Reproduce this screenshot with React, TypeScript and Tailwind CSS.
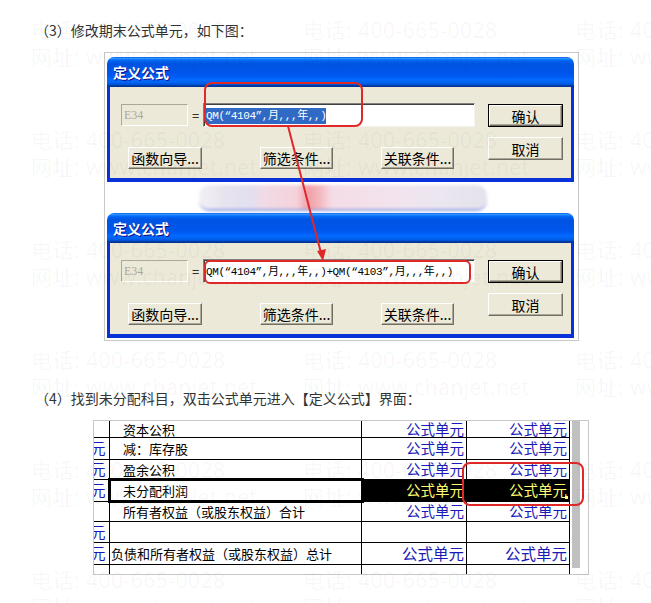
import React from "react";

const CJK = "font-['Noto_Sans_CJK_SC','Noto_Sans',sans-serif]";

function Btn({
  children,
  className = "",
  isDefault = false,
}: {
  children: React.ReactNode;
  className?: string;
  isDefault?: boolean;
}) {
  return (
    <div className={`${isDefault ? "border border-black" : ""} bg-[#ece9d8] ${className}`}>
      <div className="h-full w-full flex items-center justify-center border border-t-white border-l-white border-r-[#716f64] border-b-[#716f64] shadow-[inset_-1px_-1px_0_#aca899] text-[14px] leading-none text-black">
        {children}
      </div>
    </div>
  );
}

function Dialog({ selected, formula }: { selected: boolean; formula: string }) {
  return (
    <div className={`w-[467px] h-[125px] flex flex-col rounded-t-[7px] overflow-hidden ${CJK}`}>
      <div className="h-[30px] shrink-0 flex items-center pl-[6px] bg-[linear-gradient(180deg,#0058ee_0%,#3593ff_4%,#288eff_6%,#127dff_8%,#036ffc_10%,#0262ee_14%,#0057e5_20%,#0054e3_24%,#0055eb_56%,#005bf5_66%,#026afe_76%,#0062ef_86%,#0052d6_92%,#0040ab_94%,#003092_100%)]">
        <span className="text-white font-bold text-[14px] leading-none [text-shadow:1px_1px_0_#0f1089]">定义公式</span>
      </div>
      <div className="flex-1 bg-[#ece9d8] border-x-[3px] border-b-[4px] border-[#0831d9] flex pl-[11px] pt-[16px]">
        <div className="flex flex-col w-[354px]">
          <div className="flex items-center h-[24px]">
            <div className="w-[67px] h-[22px] border border-t-[#aca899] border-l-[#aca899] border-r-white border-b-white bg-[#ece9d8] flex items-center pl-[2px] text-[12px] text-[#aca899] font-['Liberation_Serif',serif]">
              E34
            </div>
            <div className="w-[15px] text-center text-[13px] text-black leading-none">=</div>
            <div className="w-[272px] h-[24px] bg-white border border-t-[#808080] border-l-[#808080] border-r-[#f4f3ee] border-b-[#f4f3ee] shadow-[inset_1px_1px_0_#404040] flex items-center pl-[2px] pt-[1px]">
              <span
                className={`text-[11px] leading-[16px] tracking-[-0.4px] whitespace-nowrap font-['Liberation_Mono','Noto_Sans_CJK_SC',monospace] ${
                  selected ? "bg-[#316ac5] text-white" : "text-black"
                }`}
              >
                {formula}
              </span>
            </div>
          </div>
          <div className="flex mt-[20px] h-[22px]">
            <Btn className="ml-[7px] w-[74px]">函数向导...</Btn>
            <Btn className="ml-[58px] w-[73px]">筛选条件...</Btn>
            <Btn className="ml-[48px] w-[73px]">关联条件...</Btn>
          </div>
        </div>
        <div className="flex flex-col ml-[13px]">
          <Btn isDefault className="mt-[1px] w-[75px] h-[23px]">确认</Btn>
          <Btn className="mt-[10px] w-[75px] h-[23px]">取消</Btn>
        </div>
      </div>
    </div>
  );
}

type Row = {
  label: string;
  pad: boolean;
  left: boolean;
  h: string;
  vals: boolean;
  sel?: boolean;
  big?: boolean;
};

const rows: Row[] = [
  { label: "资本公积", pad: true, left: false, h: "h-[17px]", vals: true },
  { label: "减：库存股", pad: true, left: true, h: "h-[22px]", vals: true },
  { label: "盈余公积", pad: true, left: true, h: "h-[20px]", vals: true },
  { label: "未分配利润", pad: true, left: true, h: "h-[22px]", vals: true, sel: true },
  { label: "所有者权益（或股东权益）合计", pad: true, left: false, h: "h-[20px]", vals: true },
  { label: "", pad: true, left: true, h: "h-[21px]", vals: false },
  { label: "负债和所有者权益（或股东权益）总计", pad: false, left: true, h: "h-[22px]", vals: true, big: true },
];

function Table() {
  return (
    <div className={`relative ml-[93px] mt-[12px] w-[496px] h-[155px] border border-[#c8c8c8] flex ${CJK}`}>
      <div className="flex flex-col w-[476px]">
        {rows.map((r, i) => (
          <div key={i} className={`flex ${r.h} border-b border-black`}>
            <div className="w-[16px] border-r border-black overflow-hidden flex items-center">
              {r.left && (
                <span className="ml-[-3px] text-[14.5px] leading-none text-[#1a1ab8]">元</span>
              )}
            </div>
            <div
              className={`w-[252px] border-r border-black flex items-center text-[13px] leading-none text-black whitespace-nowrap ${
                r.pad ? "pl-[13px]" : "pl-[1px]"
              } ${r.sel ? "outline-3 outline-double outline-black -outline-offset-1" : ""}`}
            >
              {r.label}
            </div>
            {[0, 1].map((c) => (
              <div
                key={c}
                className={`${c === 0 ? "w-[105px]" : "w-[103px]"} relative border-r border-black flex items-center justify-end pr-[2px] whitespace-nowrap leading-none ${
                  r.big ? "text-[15.5px]" : "text-[14.5px]"
                } ${r.sel ? "bg-black text-[#ffff70]" : "text-[#1a1ab8]"}`}
              >
                {r.vals ? "公式单元" : ""}
                {r.sel && c === 1 && (
                  <span className="absolute right-[1px] bottom-[2px] w-[3px] h-[3px] bg-[#ffff70]" />
                )}
              </div>
            ))}
          </div>
        ))}
        <div className="flex flex-1">
          <div className="w-[16px] border-r border-black" />
          <div className="w-[252px] border-r border-black" />
          <div className="w-[105px] border-r border-black" />
          <div className="w-[103px] border-r border-black" />
        </div>
      </div>
      <div className="ml-[2px] w-[8px] h-[147px] bg-[#c0c0c0]" />
      <svg className="pointer-events-none absolute left-0 top-0" width="494" height="153">
        <rect x="369" y="42" width="120" height="42" rx="7" fill="none" stroke="#e02828" strokeWidth="2" />
      </svg>
    </div>
  );
}

function Watermark() {
  const cells = Array.from({ length: 18 });
  return (
    <div className="pointer-events-none absolute left-[31px] top-[17px] grid grid-cols-[repeat(3,272px)] auto-rows-[110px] font-['Open_Sans','Noto_Sans_CJK_SC',sans-serif] text-[21px] leading-[27px] tracking-[0.5px] text-black/[0.045] whitespace-nowrap">
      {cells.map((_, i) => (
        <div key={i} className="flex flex-col">
          <span>电话: 400-665-0028</span>
          <span>网址: www.chanjet.net</span>
        </div>
      ))}
    </div>
  );
}

export default function App() {
  return (
    <div className={`relative w-[651px] h-[603px] bg-white overflow-hidden ${CJK}`}>
      <div className="pt-[20px] pl-[35px] h-[40px] text-[14px] leading-[20px] text-[#333]">
        （3）修改期末公式单元，如下图：
      </div>
      <div className="relative ml-[104px] mt-[12px] w-[475px] h-[289px] border border-[#c8c8c8] pl-[2px] pt-[4px] flex flex-col">
        <Dialog selected formula="QM(“4104”,月,,,年,,)" />
        <div className="h-[31px] flex items-center justify-center">
          <div className="w-[288px] h-[26px] rounded-[10px] blur-[1.5px] border-b-2 border-[#8ea0e0] bg-[linear-gradient(90deg,#f2f0f4_0%,#e6e2ee_10%,#e2dff0_18%,#f0dbe6_22%,#f5d2dc_34%,#f0a0a8_38%,#f4b8c0_42%,#f4dce6_46%,#f2e4ee_70%,#ebe6f0_84%,#e4e2ec_100%)]" />
        </div>
        <Dialog selected={false} formula="QM(“4104”,月,,,年,,)+QM(“4103”,月,,,年,,)" />
        <svg className="pointer-events-none absolute left-0 top-0" width="473" height="287">
          <rect x="100" y="30" width="157" height="43" rx="7" fill="none" stroke="#e02828" strokeWidth="2" />
          <line x1="183" y1="73" x2="216" y2="200" stroke="#e02828" strokeWidth="2" />
          <polygon points="218,208 212,198 221,196" fill="#e02828" />
          <rect x="100" y="208" width="265" height="22" rx="5" fill="none" stroke="#e02828" strokeWidth="2" />
        </svg>
      </div>
      <div className="pt-[47px] pl-[35px] h-[67px] text-[14px] leading-[20px] text-[#333]">
        （4）找到未分配科目，双击公式单元进入【定义公式】界面：
      </div>
      <Table />
      <Watermark />
    </div>
  );
}
